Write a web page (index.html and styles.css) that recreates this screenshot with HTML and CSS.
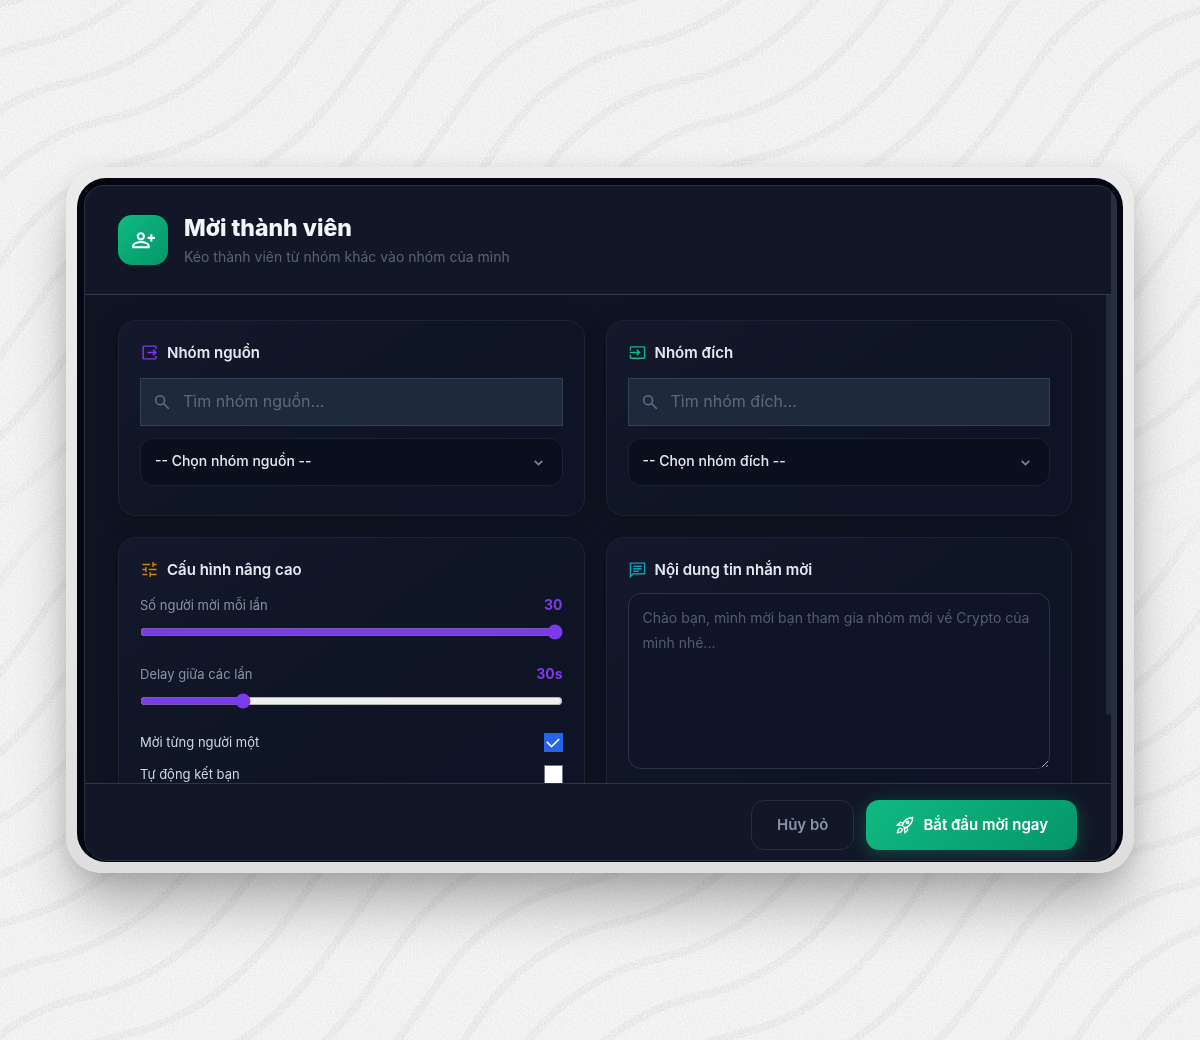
FILE: index.html
```html
<!DOCTYPE html>
<html lang="vi">
<head>
<meta charset="utf-8">
<meta name="viewport" content="width=device-width, initial-scale=1">
<title>Mời thành viên</title>
<link rel="stylesheet" href="styles.css">
</head>
<body>
<svg class="backdrop" viewBox="0 0 1200 1040" preserveAspectRatio="xMidYMid slice" aria-hidden="true">
  <defs>
    <path id="wave" d="M-621 565c50-18 88-46 131-103s50-82 97-116s70-32 111-45c50-18 88-46 131-103s50-82 97-116s70-32 111-45c50-18 88-46 131-103s50-82 97-116s70-32 111-45c50-18 88-46 131-103s50-82 97-116s70-32 111-45c50-18 88-46 131-103s50-82 97-116s70-32 111-45c50-18 88-46 131-103s50-82 97-116s70-32 111-45"/>
    <g id="band">
      <use href="#wave"/><use href="#wave" x="39" y="38"/><use href="#wave" x="78" y="75"/><use href="#wave" x="117" y="113"/><use href="#wave" x="156" y="151"/><use href="#wave" x="195" y="188"/>
    </g>
    <g id="waves">
      <use href="#band" x="-234" y="-226"/><use href="#band"/><use href="#band" x="234" y="226"/><use href="#band" x="468" y="452"/><use href="#band" x="702" y="678"/>
    </g>
    <linearGradient id="fadeDown" x1="0" y1="0" x2="0" y2="1"><stop offset=".42" stop-color="#fff"/><stop offset=".52" stop-color="#000"/></linearGradient>
    <linearGradient id="fadeUp" x1="0" y1="0" x2="0" y2="1"><stop offset=".46" stop-color="#000"/><stop offset=".56" stop-color="#fff"/></linearGradient>
    <mask id="upper" maskUnits="userSpaceOnUse" x="0" y="0" width="1200" height="1040"><rect width="1200" height="1040" fill="url(#fadeDown)"/></mask>
    <mask id="lower" maskUnits="userSpaceOnUse" x="0" y="0" width="1200" height="1040"><rect width="1200" height="1040" fill="url(#fadeUp)"/></mask>
    <filter id="grain" x="0" y="0" width="100%" height="100%">
      <feTurbulence type="fractalNoise" baseFrequency=".6" numOctaves="2" seed="4"/>
      <feColorMatrix values="0 0 0 0 1  0 0 0 0 1  0 0 0 0 1  3 0 0 0 -1.1"/>
    </filter>
  </defs>
  <rect width="1200" height="1040" fill="#eeeeee"/>
  <g class="lines" mask="url(#upper)"><use href="#waves"/></g>
  <g class="lines" mask="url(#lower)"><use href="#waves" x="-22" y="877"/><use href="#waves" x="-1192" y="-253"/></g>
  <rect width="1200" height="1040" filter="url(#grain)" opacity=".5"/>
</svg>

<main class="page">
  <div class="frame">
    <div class="screen">
      <section class="modal" aria-labelledby="title">
        <div class="sheet">
          <header class="head">
            <span class="badge"><svg viewBox="0 0 24 24"><circle cx="9.500" cy="8" r="3"/><path d="M2 18.500V17c0-2 4-3.500 7.500-3.500S17 15 17 17v1.500zM19.500 6v7M16 9.500h7"/></svg></span>
            <div>
              <h1 id="title">Mời thành viên</h1>
              <p>Kéo thành viên từ nhóm khác vào nhóm của mình</p>
            </div>
          </header>

          <div class="body">
            <div class="grid">
              <section class="card">
                <h2><svg class="violet" viewBox="0 0 24 24"><path d="M21 7V4a1 1 0 0 0-1-1H4a1 1 0 0 0-1 1v16a1 1 0 0 0 1 1h16a1 1 0 0 0 1-1v-3M9 12h12M17 8l4 4-4 4"/></svg>Nhóm nguồn</h2>
                <label class="search"><svg viewBox="0 0 24 24"><circle cx="9.500" cy="9.500" r="6"/><path d="M14 14l7 7"/></svg><input type="text" aria-label="Tìm nhóm nguồn" placeholder="Tìm nhóm nguồn..."></label>
                <div class="picker"><select aria-label="Nhóm nguồn"><option>-- Chọn nhóm nguồn --</option></select><svg viewBox="0 0 24 24"><path d="M5 9l7 7 7-7"/></svg></div>
              </section>

              <section class="card">
                <h2><svg class="green" viewBox="0 0 24 24"><path d="M2 9V5a1 1 0 0 1 1-1h18a1 1 0 0 1 1 1v14a1 1 0 0 1-1 1H3a1 1 0 0 1-1-1v-4M1 12h14M11 8l4 4-4 4"/></svg>Nhóm đích</h2>
                <label class="search"><svg viewBox="0 0 24 24"><circle cx="9.500" cy="9.500" r="6"/><path d="M14 14l7 7"/></svg><input type="text" aria-label="Tìm nhóm đích" placeholder="Tìm nhóm đích..."></label>
                <div class="picker"><select aria-label="Nhóm đích"><option>-- Chọn nhóm đích --</option></select><svg viewBox="0 0 24 24"><path d="M5 9l7 7 7-7"/></svg></div>
              </section>

              <section class="card">
                <h2><svg class="amber" viewBox="0 0 24 24"><path d="M2 5h11M17 5h5M17 1.500v7M2 12h5M7 8.500v7M11 12h11M2 19h7M13 19h9M13 15.500v7"/></svg>Cấu hình nâng cao</h2>
                <div class="slider">
                  <div class="row"><label for="count">Số người mời mỗi lần</label><output for="count">30</output></div>
                  <input id="count" type="range" min="1" max="30" value="30">
                </div>
                <div class="slider">
                  <div class="row"><label for="delay">Delay giữa các lần</label><output for="delay">30s</output></div>
                  <input id="delay" type="range" min="5" max="112" value="30">
                </div>
                <label class="check">Mời từng người một<input type="checkbox" checked></label>
                <label class="check">Tự động kết bạn<input type="checkbox"></label>
              </section>

              <section class="card">
                <h2><svg class="cyan" viewBox="0 0 24 24"><path d="M2 22V3h20v15H6zM6 7.500h12M6 11h12M6 14.500h8"/></svg>Nội dung tin nhắn mời</h2>
                <textarea aria-label="Nội dung tin nhắn mời" placeholder="Chào bạn, mình mời bạn tham gia nhóm mới về Crypto của mình nhé..."></textarea>
              </section>
            </div>
            <i class="thumb"></i>
          </div>

          <footer class="foot">
            <button class="btn ghost" type="button">Hủy bỏ</button>
            <button class="btn primary" type="button"><svg viewBox="0 0 24 24"><path d="M8.500 12.500c2-6 6-10 13.500-10.500.3 7-3.500 11.500-10 14zM9.500 9.500L5.500 8.500l-3.500 3.500 6.500.5M14.500 14.500l1 4.500-3.500 3-1-6M5 16.500c-2 .5-2.500 3-3 6 3-.5 5.500-1 6-3 .5-2.500-1-3.500-3-3z"/><circle cx="15.500" cy="8.500" r="1.500"/></svg>Bắt đầu mời ngay</button>
          </footer>
        </div>
      </section>
    </div>
  </div>
</main>
</body>
</html>
```
FILE: styles.css
```css
* { box-sizing: border-box; }

body {
  margin: 0;
  background: #f3f3f3;
  color: #e2e8f0;
  font-family: Inter, "Noto Sans", sans-serif;
  font-size: 14px;
}

h1, h2, p { margin: 0; }

svg {
  fill: none;
  stroke: currentColor;
  stroke-width: 2;
  flex: none;
}

.backdrop {
  position: fixed;
  inset: 0;
  width: 100%;
  height: 100%;
  z-index: -1;
}

.backdrop rect { stroke: none; }

.lines {
  stroke: #e5e5e5;
  stroke-width: 8;
}

.page {
  height: 100vh;
  min-height: 640px;
  padding: 167px 66px;
}

.frame {
  height: 100%;
  padding: 11px;
  border-radius: 36px;
  background: linear-gradient(#ececec, #e6e6e6 60%, #dedede);
  box-shadow: 0 36px 56px -8px rgba(0, 0, 0, .3), 0 4px 24px rgba(0, 0, 0, .1);
}

.screen {
  height: 100%;
  padding: 7px 6px 1px 7px;
  border-radius: 29px;
  background: #040612;
  overflow: hidden;
}

.modal {
  height: 100%;
  border: 1px solid #2b3244;
  border-radius: 20px 20px 24px 24px;
  background: #272e3f;
  padding-right: 5px;
  overflow: hidden;
}

.sheet {
  display: flex;
  flex-direction: column;
  height: 100%;
  background: #111726;
}

.head {
  display: flex;
  align-items: center;
  gap: 16px;
  padding: 28px 33px;
  border-bottom: 1px solid #323949;
}

.badge {
  display: grid;
  place-items: center;
  width: 50px;
  height: 50px;
  border-radius: 14px;
  background: linear-gradient(135deg, #10b981, #059669);
  color: #fff;
}

.badge svg { width: 25px; height: 25px; }

h1 {
  font-size: 23px;
  line-height: 28px;
  font-weight: 800;
  color: #f1f5f9;
}

.head p {
  margin-top: 6px;
  line-height: 18px;
  color: #586377;
}

.body {
  position: relative;
  flex: 1;
  min-height: 0;
  background: #0e1422;
  overflow: hidden;
}

.grid {
  display: grid;
  grid-template-columns: 1fr 1fr;
  gap: 21px;
  height: 100%;
  padding: 25px 39px 25px 33px;
  overflow-y: auto;
  scrollbar-width: none;
}

.thumb {
  position: absolute;
  top: 0;
  right: 0;
  width: 5px;
  height: 86%;
  border-radius: 0 0 3px 3px;
  background: #222939;
}

.card {
  display: flex;
  flex-direction: column;
  padding: 21px;
  border: 1px solid #1d2332;
  border-radius: 18px;
  background: linear-gradient(145deg, #14182b, #0e1524 50%, #0e1326);
  box-shadow: 0 4px 20px rgba(0, 0, 0, .25);
}

h2 {
  display: flex;
  align-items: center;
  gap: 8px;
  margin-bottom: 15px;
  font-size: 15px;
  line-height: 21px;
  font-weight: 600;
}

h2 svg {
  width: 17px;
  height: 17px;
  margin: 0 1px;
}

.violet { color: #7c3aed; }
.green { color: #10b981; }
.amber { color: #d18411; }
.cyan { color: #0e9fb8; }

.search {
  display: flex;
  align-items: center;
  gap: 12px;
  height: 48px;
  padding: 0 12px;
  border: 1px solid #334155;
  background: #1e293b;
  color: #64748b;
}

.search svg { width: 18px; height: 18px; }

.search input {
  flex: 1;
  min-width: 0;
  padding: 0 0 2px;
  border: 0;
  outline: 0;
  background: none;
  color: #e2e8f0;
  font: 400 16px/24px Inter, "Noto Sans", sans-serif;
}

.search input::placeholder { color: #5c697d; }

.picker {
  display: grid;
  align-items: center;
  margin: 12px 0 8px;
}

.picker > * { grid-area: 1 / 1; }

.picker select {
  appearance: none;
  width: 100%;
  height: 48px;
  padding: 0 15px 2px 14px;
  border: 1px solid #1b2130;
  border-radius: 13px;
  background: #0a0f1e;
  color: #e2e8f0;
  font: 500 14px/20px Inter, "Noto Sans", sans-serif;
}

.picker svg {
  justify-self: end;
  width: 13px;
  height: 13px;
  margin-right: 18px;
  color: #7c8799;
  stroke-width: 3;
  pointer-events: none;
}

.slider { margin-bottom: 24px; }

.row {
  display: flex;
  justify-content: space-between;
  font-size: 13px;
  line-height: 20px;
  color: #8793a6;
}

.row output {
  font-size: 14px;
  font-weight: 700;
  color: #7c3aed;
}

input[type="range"] {
  display: block;
  width: 100%;
  height: 16px;
  margin: 9px 0 0;
  accent-color: #7c3aed;
}

.check {
  display: flex;
  align-items: center;
  justify-content: space-between;
  margin-bottom: 12px;
  font-size: 13px;
  line-height: 20px;
  color: #cbd5e1;
}

.slider + .check { margin-top: -1px; }

.check input {
  appearance: none;
  width: 19px;
  height: 19px;
  margin: 0;
  border: 1px solid #6b7280;
  background: #fff;
}

.check input:checked {
  display: grid;
  place-items: center;
  border-color: #2563eb;
  background: #2563eb;
}

.check input:checked::before {
  content: "";
  width: 10px;
  height: 6px;
  margin-bottom: 3px;
  border: solid #fff;
  border-width: 0 0 2px 2px;
  border-radius: 1px;
  transform: rotate(-45deg);
}

textarea {
  display: block;
  width: 100%;
  height: 176px;
  margin: -2px 0 44px;
  padding: 11px 14px;
  border: 1px solid #2c3546;
  border-radius: 13px;
  outline: 0;
  background: #0f1526;
  color: #e2e8f0;
  font: 400 14px/25px Inter, "Noto Sans", sans-serif;
  resize: vertical;
}

textarea::placeholder { color: #535d6d; }

.foot {
  display: flex;
  justify-content: flex-end;
  gap: 12px;
  padding: 16px 34px 10px;
  border-top: 1px solid #2e3646;
  background: #111726;
}

.btn {
  display: flex;
  align-items: center;
  justify-content: center;
  gap: 9px;
  height: 50px;
  border-radius: 13px;
  font: 600 15px/20px Inter, "Noto Sans", sans-serif;
}

.ghost {
  padding: 0 25px;
  border: 1px solid #262d3d;
  background: transparent;
  color: #8793a6;
}

.primary {
  padding: 0 29px 0 30px;
  border: 0;
  background: linear-gradient(135deg, #10b981, #059669);
  box-shadow: 0 4px 18px rgba(16, 185, 129, .32);
  color: #fff;
}

.primary svg { width: 18px; height: 18px; }
```
